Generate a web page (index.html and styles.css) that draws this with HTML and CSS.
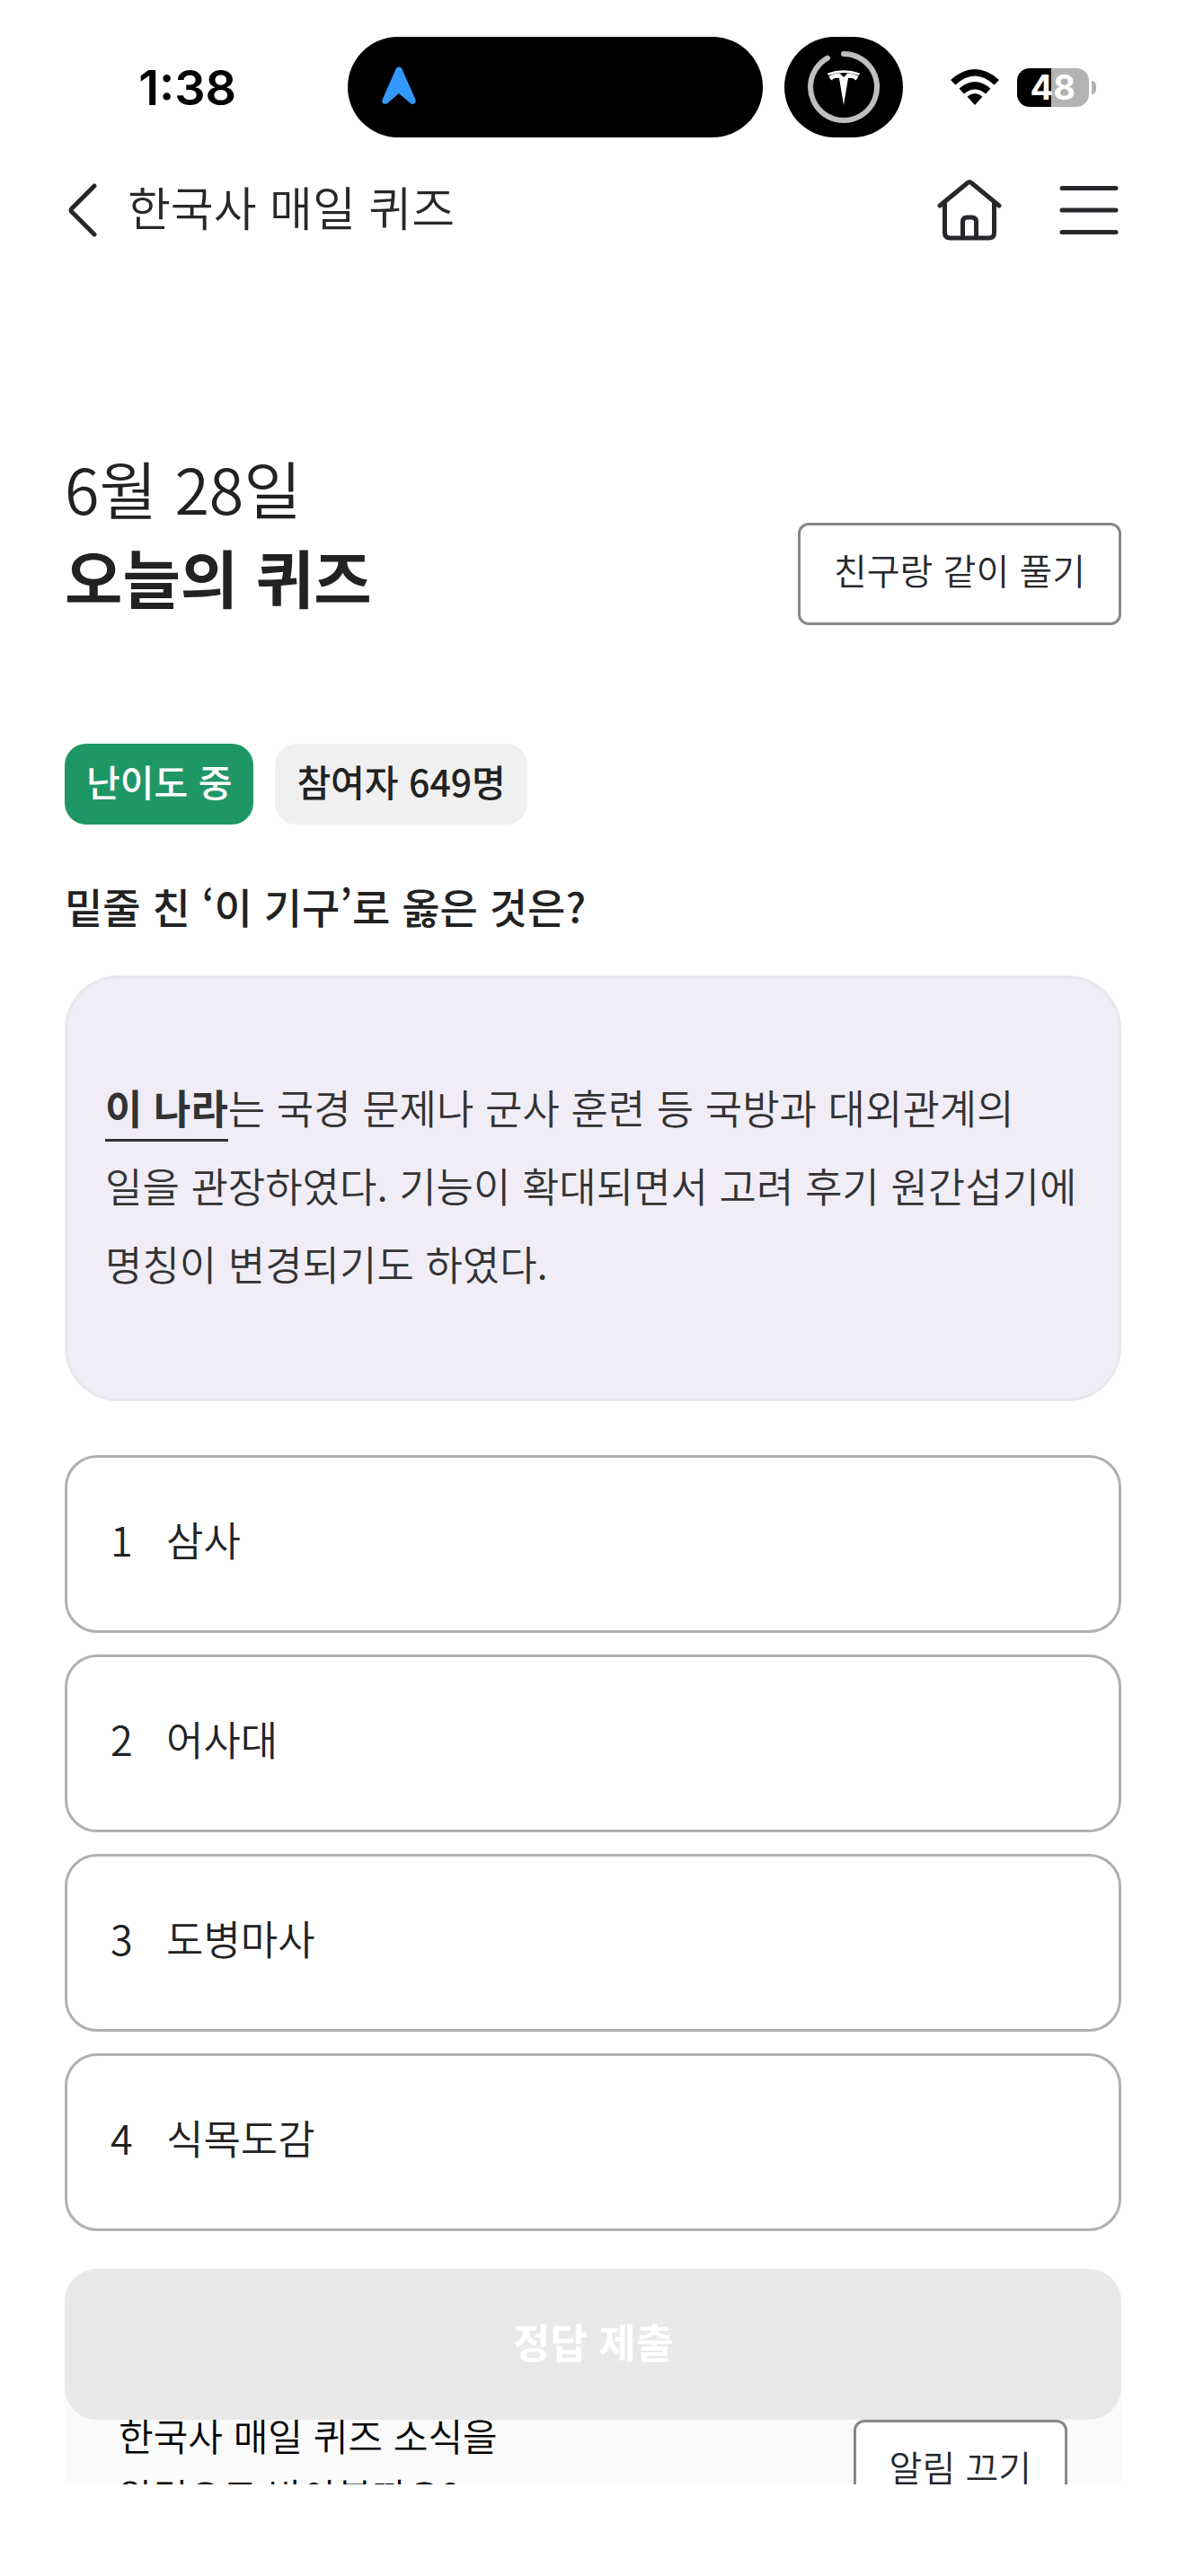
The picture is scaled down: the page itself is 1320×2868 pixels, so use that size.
FILE: index.html
```html
<!doctype html>
<html lang="ko">
<head>
    <meta charset="UTF-8">
    <meta name="viewport" content="width=device-width, initial-scale=1">
    <title>한국사 매일 퀴즈</title>
    <link rel="stylesheet" href="styles.css">
</head>
<body>
    <div class="status-bar">
        <span class="time">1:38</span>
        <div class="island">
            <svg width="38" height="42" viewBox="0 0 38 42" aria-hidden="true">
                <path d="M16 2Q19-1.500 22 2L37.500 37Q38.500 43 32.500 41.500L19 30L5.500 41.500Q-.5 43 .5 37Z" fill="#3399ff"/>
            </svg>
        </div>
        <div class="activity">
            <svg width="82" height="82" viewBox="0 0 82 82" aria-hidden="true">
                <path d="M41 4A37 37 0 1 1 23 8.700" fill="none" stroke="#bfbfbf" stroke-width="6" stroke-linecap="round"/>
                <path d="M23 25.500Q41 19 59 25.500L58 28Q41 22 24 28Z" fill="#fff"/>
                <path d="M24.500 29Q33 25 37 26L41 30L45 26Q49 25 57.500 29Q56 32 54 33.500Q52 30 46 31L41 61L36 31Q30 30 28 33.500Q25.500 32 24.500 29Z" fill="#fff"/>
            </svg>
        </div>
        <div class="signals">
            <svg width="54" height="40" viewBox="0 0 54 40" aria-hidden="true">
                <path d="M27 40L18.500 30.500Q27 23.500 35.500 30.500Z"/>
                <path d="M9.500 21.500Q27 6.500 44.500 21.500L39 27.500Q27 17.500 15 27.500Z"/>
                <path d="M0 12Q27-12 54 12L48.500 17.500Q27-2.500 5.500 17.500Z"/>
            </svg>
            <div class="battery"><span>48</span></div>
        </div>
    </div>

    <header class="header">
        <a href="#" class="back" aria-label="뒤로">
            <svg width="32" height="60" viewBox="0 0 32 60" aria-hidden="true">
                <path d="M29 3L4 28Q2 30 4 32L29 57"/>
            </svg>
        </a>
        <h1>한국사 매일 퀴즈</h1>
        <nav class="header-nav">
            <a href="#" aria-label="홈">
                <svg width="72" height="68" viewBox="0 0 72 68" aria-hidden="true">
                    <path d="M3 29L34 3.500Q36 2 38 3.500L69 29M8.500 26V59Q8.500 65 14.500 65H57.500Q63.500 65 63.500 59V26M28.500 65V47Q28.500 42 33.500 42H38.500Q43.500 42 43.500 47V65"/>
                </svg>
            </a>
            <button type="button" aria-label="메뉴">
                <svg width="66" height="54" viewBox="0 0 66 54" aria-hidden="true">
                    <path d="M3 2.500H63M3 27H63M3 51.500H63"/>
                </svg>
            </button>
        </nav>
    </header>

    <main class="content">
        <section class="intro">
            <h2>
                <span class="date">6월 28일</span>
                오늘의 퀴즈
            </h2>
            <button type="button" class="btn-outline">친구랑 같이 풀기</button>
        </section>

        <div class="badges">
            <span class="badge badge-level">난이도 중</span>
            <span class="badge">참여자 649명</span>
        </div>

        <h3 class="question">밑줄 친 ‘이 기구’로 옳은 것은?</h3>

        <div class="passage">
            <p><strong>이 나라</strong>는 국경 문제나 군사 훈련 등 국방과 대외관계의 일을 관장하였다. 기능이 확대되면서 고려 후기 원간섭기에 명칭이 변경되기도 하였다.</p>
        </div>

        <div class="options">
            <button type="button" class="option"><span class="num">1</span>삼사</button>
            <button type="button" class="option"><span class="num">2</span>어사대</button>
            <button type="button" class="option"><span class="num">3</span>도병마사</button>
            <button type="button" class="option"><span class="num">4</span>식목도감</button>
        </div>

        <button type="button" class="submit" disabled>정답 제출</button>

        <section class="notice">
            <p>한국사 매일 퀴즈 소식을<br>알림으로 받아볼까요?</p>
            <button type="button" class="btn-outline">알림 끄기</button>
        </section>
    </main>
</body>
</html>
```
FILE: styles.css
```css
* {
    box-sizing: border-box;
}
body {
    display: flex;
    flex-direction: column;
    height: 100vh;
    margin: 0;
    padding-bottom: 102px;
    background-color: #fff;
    color: #222;
    font-family: "Noto Sans CJK KR", sans-serif;
    font-weight: 350;
    word-break: keep-all;
}
h1, h2, h3, p {
    margin: 0;
}
button {
    font: inherit;
    color: inherit;
    cursor: pointer;
}
svg {
    display: block;
}

/* status bar */
.status-bar {
    display: grid;
    grid-template-columns: 5fr 462px 132px 4fr;
    align-items: center;
    column-gap: 24px;
    height: 112px;
    margin-top: 41px;
    font-family: Inter, sans-serif;
    font-weight: 600;
    color: #000;
}
.time {
    padding-left: 54px;
    font-size: 54px;
    text-align: center;
}
.island,
.activity {
    display: flex;
    align-items: center;
    height: 112px;
    background-color: #000;
    border-radius: 56px;
}
.island {
    padding: 0 38px 4px;
}
.activity {
    justify-content: center;
}
.signals {
    display: flex;
    align-items: center;
    justify-content: center;
    gap: 20px;
    padding-right: 80px;
}
.battery {
    position: relative;
    width: 80px;
    height: 43px;
    border-radius: 14px;
    background: linear-gradient(to right, #000 48%, #b3b3b3 48%);
    color: #fff;
    font-size: 38px;
    font-weight: 700;
    line-height: 43px;
    text-align: center;
}
.battery::after {
    content: "";
    position: absolute;
    top: 14px;
    right: -8px;
    width: 5px;
    height: 15px;
    border-radius: 0 5px 5px 0;
    background-color: #b3b3b3;
}

/* header */
.header {
    display: flex;
    align-items: center;
    height: 162px;
    padding: 0 75px 0 76px;
}
.header svg {
    fill: none;
    stroke: #27282c;
    stroke-width: 5;
    stroke-linecap: round;
    stroke-linejoin: round;
}
.header h1 {
    margin-left: 34px;
    padding-bottom: 10px;
    color: #27282c;
    font-size: 52px;
    font-weight: 350;
}
.header-nav {
    display: flex;
    align-items: center;
    gap: 64px;
    margin-left: auto;
}
.header-nav button {
    padding: 0;
    border: none;
    background: none;
}

/* quiz */
.content {
    flex: 1;
    min-height: 0;
    padding: 178px 72px 0;
    overflow: hidden;
}
.intro {
    display: flex;
    align-items: flex-end;
    justify-content: space-between;
}
.intro h2 {
    padding-bottom: 5px;
    font-size: 70px;
    line-height: 99px;
    font-weight: 700;
}
.date {
    display: block;
    font-weight: 350;
}
.btn-outline {
    height: 114px;
    padding: 0 37px 10px;
    border: 3px solid #888;
    border-radius: 12px;
    background-color: #fff;
    color: #27282c;
    font-size: 40px;
}
.badges {
    display: flex;
    gap: 24px;
    margin-top: 132px;
}
.badge {
    padding: 0 24px 8px;
    border-radius: 24px;
    background-color: #f0f0f0;
    font-size: 41px;
    font-weight: 500;
    line-height: 82px;
}
.badge-level {
    background-color: #1f9666;
    color: #fff;
}
.question {
    margin-top: 54px;
    padding-bottom: 2px;
    font-size: 46px;
    font-weight: 500;
    line-height: 72px;
}
.passage {
    margin-top: 40px;
    padding: 100px 42px 107px;
    border: 3px solid #e9e6f0;
    border-radius: 60px;
    background-color: #f0edf7;
    color: #333;
    font-size: 45px;
    line-height: 87px;
}
.passage strong {
    padding-bottom: 3px;
    border-bottom: 3px solid #333;
    font-weight: 700;
}
.options {
    display: flex;
    flex-direction: column;
    gap: 24px;
    margin-top: 60px;
}
.option {
    display: flex;
    align-items: center;
    height: 198px;
    padding: 0 48px 12px;
    border: 3px solid #b0b0b0;
    border-radius: 36px;
    background-color: #fff;
    font-size: 45px;
    text-align: left;
}
.num {
    width: 62px;
}
.submit {
    position: relative;
    display: block;
    width: 100%;
    height: 168px;
    margin-top: 42px;
    padding-bottom: 8px;
    border: none;
    border-radius: 36px;
    background-color: #e9e9e9;
    color: #fff;
    font-size: 45px;
    font-weight: 700;
}

/* slides under the submit button */
.notice {
    display: flex;
    align-items: flex-start;
    justify-content: space-between;
    margin-top: -60px;
    padding: 43px 60px;
    background-color: #fafafa;
    color: #000;
    font-size: 42px;
    line-height: 67px;
}
.notice .btn-outline {
    margin-top: 17px;
}
```
